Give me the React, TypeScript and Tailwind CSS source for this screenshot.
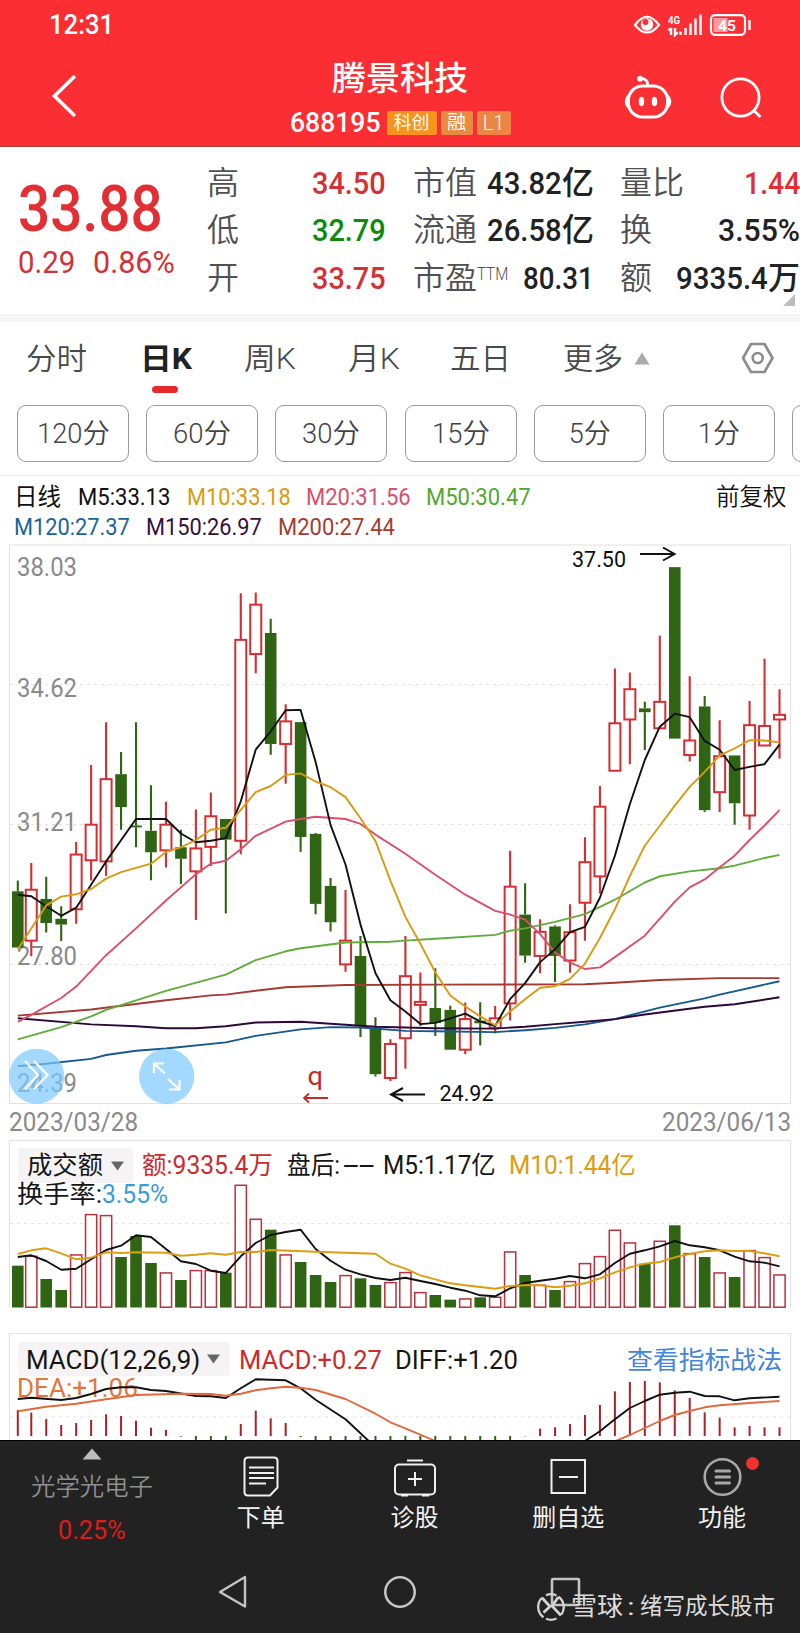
import { useLayoutEffect, useRef, type ReactNode } from "react";

/* Text squeezed or stretched horizontally to the width of its box. */
function Fit({ className, children }: { className: string; children: ReactNode }) {
  const box = useRef<HTMLSpanElement>(null);
  const inner = useRef<HTMLSpanElement>(null);
  useLayoutEffect(() => {
    if (!box.current || !inner.current) return;
    inner.current.style.transform = "none";
    const ratio = box.current.clientWidth / inner.current.offsetWidth;
    inner.current.style.transform = `scaleX(${ratio})`;
  });
  return (
    <span ref={box} className={`block shrink-0 whitespace-nowrap ${className}`}>
      <span ref={inner} className="inline-block origin-left whitespace-pre">
        {children}
      </span>
    </span>
  );
}

const RED = "#d32f33";
const GREEN = "#2f6412";

type Candle = [high: number, top: number, bottom: number, low: number, up: 0 | 1];
const candles: Candle[] = [
  [890, 918, 1065, 1065, 0], [844, 914, 1047, 1088, 1], [880, 938, 1001, 1026, 0], [957, 990, 1005, 1048, 0],
  [789, 822, 965, 1003, 1], [588, 744, 837, 890, 1], [476, 625, 840, 878, 1], [554, 612, 698, 757, 0],
  [476, 746, 751, 803, 0], [641, 760, 816, 889, 0], [684, 744, 811, 856, 1], [757, 803, 833, 899, 0],
  [704, 806, 866, 993, 1], [660, 722, 802, 852, 1], [729, 729, 783, 976, 0], [139, 261, 786, 821, 1],
  [137, 169, 298, 348, 1], [206, 243, 533, 561, 0], [429, 474, 533, 637, 1], [476, 476, 776, 815, 0],
  [766, 768, 951, 978, 0], [883, 904, 999, 1023, 0], [915, 1047, 1109, 1128, 1], [1035, 1087, 1270, 1299, 0],
  [1247, 1275, 1396, 1402, 0], [1305, 1317, 1406, 1414, 1], [1035, 1140, 1302, 1382, 1], [1130, 1207, 1215, 1270, 1],
  [1119, 1223, 1262, 1296, 0], [1217, 1228, 1332, 1332, 0], [1209, 1252, 1332, 1344, 1], [1208, 1256, 1263, 1321, 0],
  [1218, 1250, 1275, 1290, 1], [812, 906, 1211, 1256, 1], [897, 979, 1086, 1105, 0], [991, 1024, 1087, 1132, 1],
  [1007, 1010, 1087, 1155, 0], [952, 1025, 1099, 1131, 1], [777, 842, 948, 1047, 1], [643, 697, 879, 924, 1],
  [336, 479, 603, 603, 1], [346, 390, 469, 586, 1], [423, 440, 450, 549, 0], [250, 423, 492, 492, 1],
  [71, 71, 519, 519, 0], [356, 524, 562, 579, 1], [408, 435, 706, 711, 0], [471, 565, 659, 711, 1],
  [563, 563, 688, 744, 0], [421, 484, 720, 757, 1], [310, 486, 537, 537, 1], [390, 457, 469, 571, 1],
];

const volumes = [
  392, 362, 432, 465, 358, 237, 240, 366, 303, 384, 412, 435, 405, 405, 413, 149, 251, 284, 358, 381, 420, 441, 420, 430,
  450, 441, 411, 471, 480, 494, 490, 487, 485, 349, 420, 449, 465, 438, 384, 363, 284, 322, 386, 317, 271, 354, 366, 412,
  426, 345, 366, 418,
];

const histogram = [
  825, 833, 852, 870, 864, 855, 838, 843, 857, 878, 885, 905, 920, 920, 920, 867, 827, 850, 864, 906, 920, 920, 920, 920,
  920, 920, 920, 920, 920, 920, 920, 920, 920, 920, 904, 881, 877, 867, 840, 810, 769, 741, 738, 742, 766, 789, 832, 848,
  877, 873, 877, 877,
];

type Series = { color: string; points: [number, number][] };
const averages: Series[] = [
  { color: "#a53a35", points: [[0, 1243], [5, 1227], [10, 1203], [13, 1190], [14, 1188], [16, 1178], [18, 1169], [22, 1163], [28, 1162], [38, 1161], [40, 1157], [43, 1150], [47, 1145], [51, 1145]] },
  { color: "#16598f", points: [[0, 1375], [2, 1369], [5, 1356], [6, 1346], [8, 1335], [10, 1329], [14, 1313], [16, 1296], [19, 1279], [21, 1273], [23, 1274], [26, 1283], [28, 1284], [32, 1286], [34, 1281], [36, 1275], [38, 1266], [40, 1252], [43, 1222], [46, 1198], [47, 1188], [51, 1153]] },
  { color: "#2c0838", points: [[0, 1250], [5, 1266], [8, 1271], [10, 1276], [12, 1276], [14, 1271], [16, 1261], [19, 1259], [21, 1264], [24, 1272], [28, 1276], [32, 1277], [34, 1272], [36, 1265], [38, 1259], [40, 1252], [42, 1240], [46, 1220], [48, 1213], [51, 1195]] },
  { color: "#60ad3a", points: [[0, 1305], [3, 1273], [5, 1245], [6, 1228], [10, 1178], [14, 1136], [16, 1098], [18, 1075], [19, 1067], [22, 1052], [25, 1050], [26, 1047], [28, 1042], [32, 1032], [33, 1021], [34, 1015], [36, 998], [38, 978], [40, 940], [42, 895], [43, 879], [45, 866], [47, 858], [48, 851], [50, 831], [51, 823]] },
  { color: "#d9506d", points: [[0, 1259], [1, 1241], [3, 1197], [4, 1167], [6, 1085], [8, 1015], [10, 942], [12, 873], [13, 846], [14, 838], [15, 808], [16, 773], [18, 736], [19, 729], [20, 723], [22, 729], [23, 742], [24, 770], [26, 820], [28, 875], [30, 927], [32, 969], [33, 979], [34, 992], [35, 1030], [36, 1078], [37, 1104], [38, 1121], [39, 1117], [40, 1090], [42, 1034], [44, 945], [45, 908], [46, 887], [47, 855], [48, 825], [49, 784], [50, 746], [51, 706]] },
  { color: "#111111", points: [[0, 927], [1, 931], [2, 957], [3, 982], [4, 961], [6, 840], [8, 729], [10, 729], [11, 767], [12, 790], [13, 786], [14, 779], [15, 683], [16, 548], [17, 500], [18, 445], [19, 444], [20, 580], [21, 745], [22, 848], [23, 1005], [24, 1132], [25, 1203], [26, 1232], [27, 1265], [28, 1262], [29, 1250], [30, 1238], [31, 1258], [32, 1270], [33, 1200], [34, 1158], [35, 1103], [36, 1070], [37, 1025], [38, 1011], [39, 935], [40, 825], [41, 690], [42, 575], [43, 488], [44, 454], [45, 463], [46, 525], [47, 548], [48, 601], [49, 593], [50, 586], [51, 535]] },
  { color: "#d79b12", points: [[0, 1070], [1, 1015], [2, 955], [3, 932], [4, 926], [5, 912], [6, 885], [7, 868], [9, 846], [10, 815], [11, 803], [12, 784], [13, 757], [14, 752], [15, 705], [16, 659], [17, 643], [18, 614], [19, 610], [20, 631], [21, 646], [22, 672], [23, 727], [24, 787], [25, 890], [26, 985], [27, 1055], [28, 1130], [29, 1190], [30, 1219], [31, 1245], [32, 1268], [33, 1232], [34, 1200], [35, 1170], [36, 1166], [37, 1147], [38, 1107], [39, 1040], [40, 965], [41, 878], [42, 799], [43, 747], [44, 694], [45, 645], [46, 606], [47, 563], [48, 545], [49, 523], [50, 524], [51, 529]] },
];

const volumeAverages: Series[] = [
  { color: "#111111", points: [[0, 366], [1, 361], [2, 378], [3, 404], [4, 401], [5, 373], [6, 345], [7, 332], [8, 301], [9, 306], [10, 342], [11, 379], [12, 387], [13, 407], [14, 414], [15, 364], [16, 324], [17, 300], [18, 291], [19, 284], [20, 342], [21, 377], [22, 404], [23, 418], [24, 429], [25, 435], [26, 428], [27, 438], [28, 447], [29, 458], [30, 467], [31, 481], [32, 484], [33, 460], [34, 444], [35, 437], [36, 431], [37, 423], [38, 430], [39, 418], [40, 384], [41, 356], [42, 346], [43, 334], [44, 318], [45, 331], [46, 337], [47, 346], [48, 365], [49, 379], [50, 383], [51, 394]] },
  { color: "#dc9d10", points: [[0, 357], [1, 346], [2, 340], [3, 355], [4, 373], [5, 368], [6, 352], [7, 354], [8, 352], [10, 353], [11, 362], [12, 359], [13, 355], [14, 359], [15, 351], [16, 351], [17, 345], [20, 350], [24, 356], [25, 386], [26, 401], [27, 421], [28, 433], [29, 445], [30, 451], [31, 456], [32, 461], [33, 453], [34, 451], [35, 451], [36, 457], [37, 452], [38, 445], [39, 430], [40, 412], [41, 397], [42, 386], [43, 381], [44, 367], [45, 357], [46, 349], [47, 346], [48, 348], [49, 348], [50, 355], [51, 364]] },
];

const macdLines: Series[] = [
  { color: "#111111", points: [[0, 792], [1, 788], [3, 795], [4, 789], [5, 777], [6, 762], [7, 757], [8, 757], [9, 765], [10, 768], [12, 783], [13, 784], [14, 789], [15, 760], [16, 733], [18, 736], [19, 760], [20, 794], [22, 853], [23.6, 920]] },
  { color: "#111111", points: [[38, 918], [39, 889], [40, 853], [41, 819], [42, 798], [43, 779], [44, 773], [45, 770], [46, 783], [47, 784], [48, 796], [49, 790], [51, 785]] },
  { color: "#e06a3c", points: [[0, 829], [2, 815], [4, 806], [6, 793], [8, 780], [11, 776], [13, 777], [14, 782], [15, 776], [16, 766], [17, 760], [18, 755], [19, 758], [20, 765], [22, 792], [24, 836], [25, 862], [26, 880], [28, 918]] },
  { color: "#e06a3c", points: [[40, 919], [41, 900], [43, 858], [44, 840], [45, 828], [46, 817], [47, 811], [49, 804], [51, 798]] },
];

const cx = (i: number) => (i === 0 ? 17.8 : 16.3 + 14.965 * i);
const priceY = (v: number) => 540 + v * 0.38265;
const lowerY = (v: number) => 1135 + v / 3;
const path = (s: Series, y: (v: number) => number) =>
  s.points.map(([i, v], n) => `${n ? "L" : "M"}${cx(i).toFixed(1)} ${y(v).toFixed(1)}`).join("");

function Lines({ list, y }: { list: Series[]; y: (v: number) => number }) {
  return (
    <g fill="none" strokeWidth="1.9" strokeLinejoin="round">
      {list.map((s, n) => (
        <path key={n} d={path(s, y)} stroke={s.color} />
      ))}
    </g>
  );
}

function StatusBar() {
  return (
    <div className="flex h-[50px] items-center pl-[49px] pr-[49px] text-white">
      <Fit className="w-[65px] text-[28px] font-medium leading-[52px]">12:31</Fit>
      <svg className="ml-auto" width="118" height="24" viewBox="633 13 118 24">
        <path d="M635 25Q647 8.500 659 25Q647 40 635 25Z" fill="none" stroke="#fff" strokeWidth="2.200" />
        <circle cx="647" cy="24.500" r="6.200" fill="#fff" />
        <circle cx="645.500" cy="22" r="3" fill="#fa2e33" />
        <text x="668" y="23.500" fontSize="11.500" fontWeight="700" fill="#fff" textLength="12" lengthAdjust="spacingAndGlyphs">4G</text>
        <path d="M671 28v7M668.500 30.500l2.500-2.500M675 28v7l2.600-2.600M680.500 31.500v3.500M685.500 28v7M690.500 23.500v11.500M695.500 18.500v16.500M700.500 14.500v20.500" stroke="#fff" strokeWidth="2.400" fill="none" />
        <rect x="711" y="15.200" width="34" height="19.600" rx="4" fill="none" stroke="#fff" strokeWidth="2.200" />
        <rect x="713.500" y="18" width="14" height="14" fill="#ff9a9c" />
        <path d="M749.500 20v10" stroke="#fff" strokeWidth="2.400" />
        <text x="718" y="30.500" fontSize="15.500" fontWeight="700" fill="#fff" textLength="18" lengthAdjust="spacingAndGlyphs">45</text>
      </svg>
    </div>
  );
}

function Header() {
  return (
    <header className="h-[147px] shrink-0 border-b border-[#a83a35] bg-[#fa2e33] text-white">
      <StatusBar />
      <div className="flex h-[96px]">
        <div className="w-[280px] pl-[48px] pt-[22px]">
          <svg width="32" height="48" viewBox="48 72 32 48">
            <path d="M75 76L54.500 96L75 116" fill="none" stroke="#fff" strokeWidth="3.600" />
          </svg>
        </div>
        <div className="flex w-[240px] flex-col items-center pt-[10px]">
          <Fit className="w-[136px] text-[33px] font-medium leading-[38px]">腾景科技</Fit>
          <div className="mt-[13px] flex h-[24px] items-center">
            <Fit className="w-[90px] text-[28px] font-medium leading-[26px]">688195</Fit>
            <span className="ml-[7px] flex h-[24px] w-[50px] items-center justify-center rounded-[2px] bg-[#f6941d] text-[18px] leading-[24px]">科创</span>
            <span className="ml-[4px] flex h-[24px] w-[32px] items-center justify-center rounded-[2px] bg-[#e98a42] text-[19px] leading-[24px]">融</span>
            <span className="ml-[4px] flex h-[24px] w-[34px] items-center justify-center rounded-[2px] bg-[#ec8644] text-[20px] font-light leading-[24px]">L1</span>
          </div>
        </div>
        <div className="flex w-[280px] gap-[44px] pl-[103px] pt-[22px]">
          <svg width="50" height="50" viewBox="622 72 50 50">
            <rect x="627.500" y="86" width="39" height="31" rx="14" fill="none" stroke="#fff" strokeWidth="3" />
            <path d="M627 95.500q-5 6 0 12zM667 95.500q5 6 0 12z" fill="#fff" stroke="#fff" strokeWidth="1.600" />
            <ellipse cx="640.500" cy="101.500" rx="2.700" ry="4.800" fill="#fff" />
            <ellipse cx="653.500" cy="101.500" rx="2.700" ry="4.800" fill="#fff" />
            <path d="M646.500 86q1-7.500-7-7.500" fill="none" stroke="#fff" strokeWidth="2.800" />
            <circle cx="639" cy="78.700" r="2.900" fill="#fff" />
          </svg>
          <svg width="48" height="50" viewBox="717 71.500 48 50">
            <circle cx="740.500" cy="97" r="18.600" fill="none" stroke="#fff" strokeWidth="2.800" />
            <path d="M753.500 109.500l7 7" stroke="#fff" strokeWidth="2.800" />
          </svg>
        </div>
      </div>
    </header>
  );
}

function Cell({ label, children }: { label: ReactNode; children: ReactNode }) {
  return (
    <div className="flex h-[47.300px] justify-between whitespace-nowrap text-[32px] leading-[47.300px] text-[#222]">
      <span className="flex font-[350] text-[#505050]">{label}</span>
      <span className="flex font-medium">{children}</span>
    </div>
  );
}

function Quote() {
  return (
    <section className="relative flex h-[167px] shrink-0 pt-[13px]">
      <div className="w-[207px] pl-[18px] text-[#e22f33]">
        <Fit className="mt-[17px] w-[145px] text-[65px] font-medium leading-[64px]">33.88</Fit>
        <div className="mt-[2px] flex gap-[18px] text-[32px] leading-[38px] text-[#d33135]">
          <Fit className="w-[57px]">0.29</Fit>
          <Fit className="w-[82px]">0.86%</Fit>
        </div>
      </div>
      <div className="w-[179px]">
        <Cell label="高"><Fit className="w-[74px] text-[#d33135]">34.50</Fit></Cell>
        <Cell label="低"><Fit className="w-[74px] text-[#0b8a0b]">32.79</Fit></Cell>
        <Cell label="开"><Fit className="w-[74px] text-[#d33135]">33.75</Fit></Cell>
      </div>
      <div className="ml-[27px] w-[181px]">
        <Cell label="市值"><Fit className="w-[75px]">43.82</Fit>亿</Cell>
        <Cell label="流通"><Fit className="w-[75px]">26.58</Fit>亿</Cell>
        <Cell label={<>市盈<Fit className="-mt-[5px] w-[31px] text-[18px] font-light">TTM</Fit></>}><Fit className="w-[71px]">80.31</Fit></Cell>
      </div>
      <div className="ml-[26px] w-[180px]">
        <Cell label="量比"><Fit className="w-[56px] text-[#e22f33]">1.44</Fit></Cell>
        <Cell label="换"><Fit className="w-[82px]">3.55%</Fit></Cell>
        <Cell label="额"><Fit className="w-[92px]">9335.4</Fit>万</Cell>
      </div>
      <svg className="absolute bottom-[8px] right-[5px]" width="12" height="12" viewBox="0 0 13 13">
        <path d="M13 0V13H0Z" fill="#bdbdbd" />
      </svg>
    </section>
  );
}

function Tabs() {
  return (
    <nav className="flex h-[83px] shrink-0 text-[30px] font-[350] leading-[74px] text-[#4a4a4a]">
      <Fit className="ml-[26px] w-[61px]">分时</Fit>
      <div className="relative ml-[53px] font-bold text-[#222]">
        <Fit className="w-[52px]">日K</Fit>
        <span className="absolute left-[12px] top-[64px] h-[7px] w-[26px] rounded-full bg-[#e52a2e]" />
      </div>
      <Fit className="ml-[52px] w-[52px]">周K</Fit>
      <Fit className="ml-[52px] w-[52px]">月K</Fit>
      <Fit className="ml-[50px] w-[61px]">五日</Fit>
      <Fit className="ml-[52px] w-[60px]">更多</Fit>
      <svg className="ml-[11px] mt-[30px]" width="16" height="13" viewBox="0 0 16 13">
        <path d="M8 0.500L15.500 12.500H0.500Z" fill="#aaa" />
      </svg>
      <svg className="ml-[91px] mt-[19px]" width="34" height="34" viewBox="741 341 34 34" fill="none" stroke="#8c8c8c" strokeWidth="2.600" strokeLinejoin="round">
        <path d="M751 344H764.500L772.500 358L764.500 372H751L743 358Z" />
        <circle cx="757.700" cy="358" r="5" />
      </svg>
    </nav>
  );
}

function Periods() {
  const box = "flex h-[57px] w-[112px] shrink-0 justify-center rounded-[9px] border border-[#9a9a9a]";
  const text = "text-[27px] font-[350] leading-[57px] text-[#444]";
  return (
    <div className="flex h-[70px] shrink-0 gap-[17.200px] overflow-hidden pl-[17px]">
      <div className={box}><Fit className={`w-[73px] ${text}`}>120分</Fit></div>
      <div className={box}><Fit className={`w-[58px] ${text}`}>60分</Fit></div>
      <div className={box}><Fit className={`w-[58px] ${text}`}>30分</Fit></div>
      <div className={box}><Fit className={`w-[58px] ${text}`}>15分</Fit></div>
      <div className={box}><Fit className={`w-[42px] ${text}`}>5分</Fit></div>
      <div className={box}><Fit className={`w-[42px] ${text}`}>1分</Fit></div>
      <div className={box} />
    </div>
  );
}

function Legend() {
  return (
    <div className="flex h-[65px] shrink-0 flex-col border-t border-[#ececec] pt-[6px] text-[23.500px] leading-[30px] text-[#111]">
      <div className="flex h-[30px] pl-[14px] pr-[13px]">
        <Fit className="w-[47px]">日线</Fit>
        <Fit className="ml-[17px] w-[92px]">M5:33.13</Fit>
        <Fit className="ml-[17px] w-[104px] text-[#d79b12]">M10:33.18</Fit>
        <Fit className="ml-[15px] w-[105px] text-[#d9506d]">M20:31.56</Fit>
        <Fit className="ml-[15px] w-[105px] text-[#55a72f]">M50:30.47</Fit>
        <Fit className="ml-auto w-[71px] font-[350]">前复权</Fit>
      </div>
      <div className="flex h-[30px] pl-[14px]">
        <Fit className="w-[116px] text-[#1b649b]">M120:27.37</Fit>
        <Fit className="ml-[16px] w-[116px] text-[#35103f]">M150:26.97</Fit>
        <Fit className="ml-[16px] w-[117px] text-[#a33d33]">M200:27.44</Fit>
      </div>
    </div>
  );
}

function PriceChart() {
  const scale: [string, number][] = [["38.03", 567], ["34.62", 688], ["31.21", 821.5], ["27.80", 955.5], ["24.39", 1083]];
  return (
    <svg className="relative block shrink-0 overflow-visible" width="800" height="564" viewBox="0 540 800 564">
      <g stroke="#e2e2e2" strokeWidth="1" fill="none">
        <rect x="9.500" y="545" width="781" height="558.500" />
        <path d="M10 684.500H790M10 824.500H790M10 964.500H790" strokeDasharray="3 4" />
      </g>
      <g fontSize="25" fill="#8a8a8a">
        {scale.map(([t, y]) => (
          <text key={t} x="17" y={y + 9} textLength="60" lengthAdjust="spacingAndGlyphs">{t}</text>
        ))}
      </g>
      {candles.map(([h, t, b, l, up], i) => {
        const x = cx(i);
        const top = priceY(t);
        const bottom = priceY(b);
        const color = up ? RED : GREEN;
        return (
          <g key={i} stroke={color}>
            <path d={`M${x} ${priceY(h)}V${top}M${x} ${bottom}V${priceY(l)}`} strokeWidth="2.100" />
            {up ? (
              <rect x={x - 5.5} y={top} width="11" height={Math.max(bottom - top, 1)} fill="#fff" strokeWidth="2" />
            ) : (
              <rect x={x - 5.8} y={top} width="11.600" height={Math.max(bottom - top, 1.600)} fill={color} stroke="none" />
            )}
          </g>
        );
      })}
      <Lines list={averages} y={priceY} />
      <g fontSize="22.500" fill="#111">
        <text x="572" y="567" textLength="54" lengthAdjust="spacingAndGlyphs">37.50</text>
        <text x="439.500" y="1101" textLength="54" lengthAdjust="spacingAndGlyphs">24.92</text>
      </g>
      <g fill="none" stroke="#111" strokeWidth="2">
        <path d="M640 554H674M663 547.500L674.500 554L663 560.500" />
        <path d="M425 1094.500H391M403 1088L391 1094.500L403 1101" />
      </g>
      <text x="307.500" y="1085" fontSize="26" fill="#c22a2a" textLength="15.500" lengthAdjust="spacingAndGlyphs">q</text>
      <path d="M328 1098H304M309 1093.500L304 1098L309 1102.500" fill="none" stroke="#c22a2a" strokeWidth="1.800" />
      <circle cx="36.700" cy="1076.300" r="27.600" fill="#7cc8ff" fillOpacity="0.700" />
      <circle cx="166.700" cy="1076.300" r="27.600" fill="#7cc8ff" fillOpacity="0.700" />
      <g fill="none" stroke="#fff" strokeWidth="2.200">
        <path d="M25 1061L38 1075L25 1089M34 1061L47.500 1075L34 1089" />
        <path d="M154 1073V1063.500H164M154 1063.500L165 1073.500M179.500 1080V1089.500H169M179.500 1089.500L168 1079" />
      </g>
    </svg>
  );
}

function Caret() {
  return (
    <svg className="self-center" width="13" height="10" viewBox="0 0 13 10">
      <path d="M0 0.500H13L6.500 9.500Z" fill="#666" />
    </svg>
  );
}

function VolumePanel() {
  return (
    <section className="relative h-[193px] shrink-0 text-[25px] text-[#161616]">
      <svg className="absolute left-0 top-0" width="800" height="193" viewBox="0 1140 800 193">
        <path d="M9.500 1307V1140.500H790.500V1307" fill="none" stroke="#e2e2e2" />
        <path d="M10 1223.500H790" stroke="#e2e2e2" strokeDasharray="3 4" />
        {volumes.map((v, i) =>
          candles[i][4] ? (
            <rect key={i} x={cx(i) - 5.6} y={lowerY(v) + 0.6} width="11.200" height={1306.600 - lowerY(v)} fill="#fff" stroke="#b8323c" strokeWidth="1.500" />
          ) : (
            <rect key={i} x={cx(i) - 5.8} y={lowerY(v)} width="11.600" height={1307.500 - lowerY(v)} fill={GREEN} />
          ),
        )}
        <Lines list={volumeAverages} y={lowerY} />
      </svg>
      <div className="relative flex pl-[18px] pt-[8px] leading-[36px]">
        <div className="flex h-[35px] w-[115px] gap-[8px] rounded-[2px] bg-[#f6f3f5] pl-[9px]">
          <Fit className="w-[76px]">成交额</Fit>
          <Caret />
        </div>
        <Fit className="ml-[9px] w-[131px] text-[#cb2a2e]">额:9335.4万</Fit>
        <Fit className="ml-[14px] w-[53px]">盘后:</Fit>
        <Fit className="ml-[3px] w-[32px]">--</Fit>
        <Fit className="ml-[8px] w-[113px]">M5:1.17亿</Fit>
        <Fit className="ml-[13px] w-[127px] text-[#dc9d10]">M10:1.44亿</Fit>
      </div>
      <div className="relative -mt-[6px] flex pl-[17px] leading-[33px]">
        <Fit className="w-[85px]">换手率:</Fit>
        <Fit className="w-[66px] text-[#3a9bd6]">3.55%</Fit>
      </div>
    </section>
  );
}

function MacdPanel() {
  return (
    <section className="relative h-[107px] shrink-0 overflow-hidden text-[25px] text-[#161616]">
      <svg className="absolute left-0 top-0" width="800" height="107" viewBox="0 1333 800 107">
        <path d="M9.500 1440V1333.500H790.500V1440" fill="none" stroke="#e2e2e2" />
        <path d="M10 1417H790" stroke="#e2e2e2" strokeDasharray="3 4" />
        {histogram.map((v, i) => (
          <path key={i} d={`M${cx(i)} 1436V${lowerY(v)}`} stroke={v > 903 ? GREEN : "#a8222c"} strokeWidth="2" />
        ))}
      </svg>
      <div className="relative flex pl-[18px] pr-[18px] pt-[9px] leading-[37px]">
        <div className="flex h-[34px] w-[212px] gap-[7px] rounded-[2px] bg-[#f6f3f5] pl-[8px]">
          <Fit className="w-[174px]">MACD(12,26,9)</Fit>
          <Caret />
        </div>
        <Fit className="ml-[9px] w-[143px] text-[#cb2a2e]">MACD:+0.27</Fit>
        <Fit className="ml-[13px] w-[123px]">DIFF:+1.20</Fit>
        <Fit className="ml-auto w-[155px] text-[#4385d6]">查看指标战法</Fit>
      </div>
      <Fit className="relative -mt-[6px] ml-[17px] w-[121px] leading-[32px] text-[#e2763f]">DEA:+1.06</Fit>
      <svg className="absolute left-0 top-0" width="800" height="107" viewBox="0 1333 800 107">
        <Lines list={macdLines} y={lowerY} />
      </svg>
    </section>
  );
}

function Action({ label, children }: { label: string; children: ReactNode }) {
  return (
    <div className="relative flex w-[153.700px] flex-col items-center pt-[14px] text-[24px] leading-[30px] text-[#f2f2f2]">
      <svg width="46" height="46" viewBox="0 0 46 46" fill="none" stroke="#f0f0f0" strokeWidth="2">
        {children}
      </svg>
      <span className="mt-[2px]">{label}</span>
    </div>
  );
}

function BottomBar() {
  return (
    <footer className="relative h-[193px] shrink-0 border-t border-black bg-[#222]">
      <div className="flex h-[118px]">
        <div className="flex w-[184px] flex-col items-center pt-[7px]">
          <svg width="20" height="12" viewBox="0 0 20 12">
            <path d="M10 0.500L19.500 11.500H0.500Z" fill="#bbb" />
          </svg>
          <Fit className="mt-[11px] w-[122px] text-[24px] font-[350] leading-[32px] text-[#8f8f8f]">光学光电子</Fit>
          <Fit className="mt-[11px] w-[68px] text-[26px] leading-[32px] text-[#e01b1b]">0.25%</Fit>
        </div>
        <Action label="下单">
          <path d="M10 2.500H36Q39.500 2.500 39.500 6V32.500L32 40.500H10Q6.500 40.500 6.500 37V6Q6.500 2.500 10 2.500Z" />
          <path d="M11 12.500H36M11 18H36M11 23H36M11 28.500H28" />
        </Action>
        <Action label="诊股">
          <rect x="3" y="9.500" width="40" height="30" rx="4" />
          <path d="M15 5.500H31M16 24H30M23 17V31M9 40.500H16M30 40.500H37" />
        </Action>
        <Action label="删自选">
          <path d="M6.500 5H40V38H6.500ZM14 22H33" />
        </Action>
        <Action label="功能">
          <circle cx="23.500" cy="22" r="17.800" stroke="#a8a8a8" strokeWidth="2.600" />
          <path d="M17 16H30.500M17 22H30.500M17 28H30.500" stroke="#a8a8a8" strokeWidth="3" strokeLinecap="round" />
        </Action>
        <span className="absolute left-[746px] top-[16px] h-[13px] w-[13px] rounded-full bg-[#f0312f]" />
      </div>
      <div className="flex h-[66px] items-center pl-[217px]">
        <svg width="32" height="36" viewBox="217 1574 32 36" fill="none" stroke="#c4c4c4" strokeWidth="2.400" strokeLinejoin="round">
          <path d="M245 1577V1606.500L220 1592Z" />
        </svg>
        <svg className="ml-[134px]" width="34" height="34" viewBox="0 0 34 34" fill="none" stroke="#c4c4c4" strokeWidth="2.600">
          <circle cx="17" cy="17" r="14.700" />
        </svg>
        <svg className="ml-[131px]" width="34" height="34" viewBox="549 1574.500 34 34" fill="none" stroke="#c4c4c4" strokeWidth="2.600">
          <rect x="553" y="1578.500" width="27" height="26" rx="1" />
        </svg>
      </div>
      <div className="absolute left-[536px] top-[150px] flex h-[32px] items-center text-[#dcdcdc]">
        <svg width="30" height="30" viewBox="0 0 30 30" fill="none" stroke="#d4d4d4" strokeWidth="2.300">
          <path d="M10 3.200A12.800 12.800 0 0 1 20.500 3.500M22.500 4.700A12.800 12.800 0 0 1 25.500 22.300M20.500 26.500A12.800 12.800 0 0 1 10 26.800M7.500 25.300A12.800 12.800 0 0 1 6 5.800" />
          <path d="M6 5.800L14 14.500L7.500 20.500M22.500 5L16 14L25 23.500" strokeWidth="2.800" />
        </svg>
        <Fit className="ml-[5px] w-[52px] text-[25px] font-normal leading-[32px]">雪球</Fit>
        <Fit className="ml-[4px] w-[8px] text-[24px] leading-[32px]">:</Fit>
        <Fit className="ml-[5px] w-[135px] text-[23px] leading-[32px]">绪写成长股市</Fit>
      </div>
    </footer>
  );
}

export default function App() {
  return (
    <main className="flex h-[1633px] w-[800px] flex-col overflow-hidden bg-white font-[Roboto,'Noto_Sans_CJK_SC',sans-serif]">
      <Header />
      <Quote />
      <div className="h-[8px] shrink-0 bg-[#f6f6f6]" />
      <Tabs />
      <Periods />
      <Legend />
      <PriceChart />
      <div className="flex h-[36px] shrink-0 justify-between px-[9px] text-[25px] leading-[38px] text-[#8a8a8a]">
        <Fit className="w-[129px]">2023/03/28</Fit>
        <Fit className="w-[129px]">2023/06/13</Fit>
      </div>
      <VolumePanel />
      <MacdPanel />
      <BottomBar />
    </main>
  );
}
